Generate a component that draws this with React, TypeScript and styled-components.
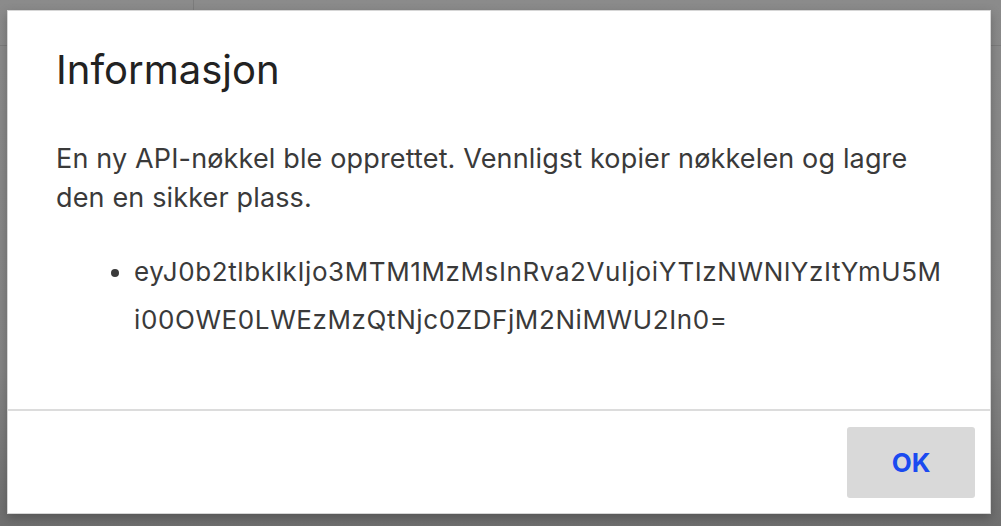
import React from 'react';
import styled, {createGlobalStyle} from 'styled-components';

const GlobalStyle = createGlobalStyle`
    html, body {
        margin: 0;
        padding: 0;
        width: 1001px;
        height: 526px;
        overflow: hidden;
        font-family: 'Inter', 'Noto Sans', sans-serif;
    }
`;

const apiKey = 'eyJ0b2tlbklkIjo3MTM1MzMsInRva2VuIjoiYTIzNWNlYzItYmU5Mi00OWE0LWEzMzQtNjc0ZDFjM2NiMWU2In0=';

// the page behind the modal, dimmed
const Backdrop = styled.div`
    position: fixed;
    inset: 0;
    background: linear-gradient(#8b8b8b 0%, #858585 70%, #6f6f6f 100%);
`;

const BackdropHeader = styled.div`
    display: flex;
    height: 45px;
    border-bottom: 1px solid #7c7c7c;
`;

const BackdropLogoCell = styled.div`
    width: 193px;
    border-right: 1px solid #7c7c7c;
`;

const Overlay = styled.div`
    position: fixed;
    inset: 0;
    display: flex;
    align-items: flex-start;
    padding: 10px 10px 0 7px;
`;

const Dialog = styled.div`
    width: 984px;
    height: 504px;
    box-sizing: border-box;
    background: #fff;
    border: 1px solid #d6d6d6;
    box-shadow: 0 4px 10px rgba(0, 0, 0, 0.25);
    display: flex;
    flex-direction: column;
`;

const DialogBody = styled.div`
    flex: 1;
    padding: 35px 44px 0 48px;
    color: #333;
`;

const Title = styled.h2`
    margin: 0 0 45px 0;
    font-size: 40px;
    font-weight: 400;
    line-height: 48px;
    color: #222;
`;

const Message = styled.p`
    margin: 0 0 31px 0;
    font-size: 27px;
    line-height: 39px;
    letter-spacing: 0.15px;
    color: #3a3a3a;
`;

const KeyList = styled.ul`
    margin: 0;
    padding-left: 78px;
    font-size: 26px;
    line-height: 48px;
    letter-spacing: 0.6px;
    color: #3a3a3a;

    li {
        word-break: break-all;
    }
`;

const DialogFooter = styled.div`
    display: flex;
    justify-content: flex-end;
    border-top: 2px solid #dcdcdc;
    padding: 16px 15px 15px 0;
`;

const OkButton = styled.button`
    width: 128px;
    height: 71px;
    border: none;
    border-radius: 3px;
    background: #d9d9d9;
    color: #1a4af0;
    font-family: 'Inter', 'Noto Sans', sans-serif;
    font-size: 26px;
    font-weight: 700;
    cursor: pointer;
`;

export default function App() {
    return (
        <>
            <GlobalStyle/>
            <Backdrop>
                <BackdropHeader>
                    <BackdropLogoCell/>
                </BackdropHeader>
            </Backdrop>
            <Overlay>
                <Dialog role='dialog'>
                    <DialogBody>
                        <Title>Informasjon</Title>
                        <Message>
                            En ny API-nøkkel ble opprettet. Vennligst kopier nøkkelen og lagre den en sikker plass.
                        </Message>
                        <KeyList>
                            <li>{apiKey}</li>
                        </KeyList>
                    </DialogBody>
                    <DialogFooter>
                        <OkButton>OK</OkButton>
                    </DialogFooter>
                </Dialog>
            </Overlay>
        </>
    );
}
